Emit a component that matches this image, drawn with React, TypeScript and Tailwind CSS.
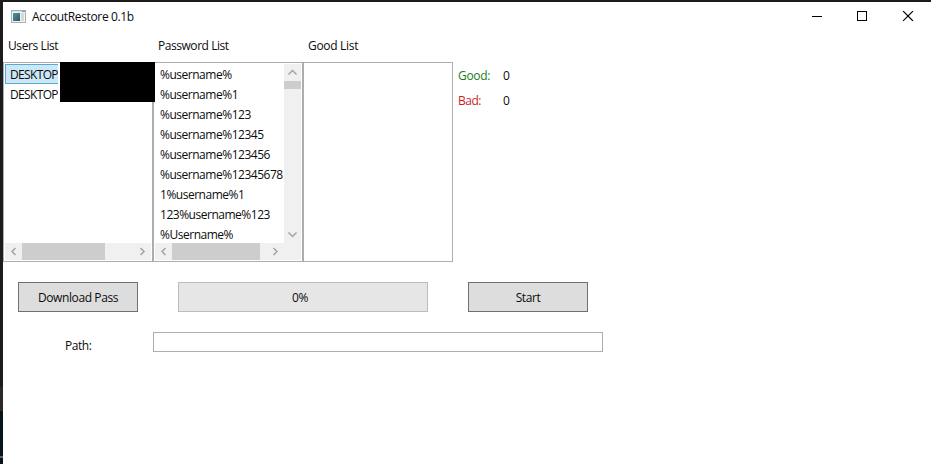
import React from "react";

const passwords = [
  "%username%",
  "%username%1",
  "%username%123",
  "%username%12345",
  "%username%123456",
  "%username%12345678",
  "1%username%1",
  "123%username%123",
  "%Username%",
];

const arrows = {
  left: "M10.5 5 7 8.5l3.5 3.5",
  right: "M6.5 5l3.5 3.5L6.5 12",
  up: "M4.5 10.5l4-4 4 4",
  down: "M4.5 6.5l4 4 4-4",
};

function Arrow({ dir }: { dir: keyof typeof arrows }) {
  return (
    <svg className="size-[17px] shrink-0" viewBox="0 0 17 17" fill="none" stroke="#a3a3a3" strokeWidth="1.5">
      <path d={arrows[dir]} />
    </svg>
  );
}

function ListBox({ children }: { children?: React.ReactNode }) {
  return <div className="flex h-[200px] w-[150px] flex-col border border-[#abadb3] p-px">{children}</div>;
}

function HScroll({ thumb }: { thumb: string }) {
  return (
    <div className="flex h-[17px] shrink-0 bg-[#f0f0f0]">
      <Arrow dir="left" />
      <div className="flex-1">
        <div className={`h-full bg-[#cdcdcd] ${thumb}`} />
      </div>
      <Arrow dir="right" />
    </div>
  );
}

function TitleBar() {
  return (
    <div className="flex h-[29px] items-center">
      <svg className="ml-2 h-[13px] w-[15px]" viewBox="0 0 15 13">
        <defs>
          <linearGradient id="pane" x1="0" y1="0" x2="1" y2="1">
            <stop offset="0" stopColor="#4f9a9a" />
            <stop offset="1" stopColor="#31546b" />
          </linearGradient>
        </defs>
        <rect x=".5" y=".5" width="14" height="12" fill="#f2f2f2" stroke="#a9b0b2" />
        <rect x="1" y="1" width="13" height="1" fill="#d8dcdd" />
        <rect x="2" y="3" width="7" height="8" fill="url(#pane)" />
        <rect x="10" y="3" width="3" height="8" fill="#d5d9da" />
        <rect x="11" y="1" width="3" height="1" fill="#6fae9f" />
      </svg>
      <span className="ml-[6px] flex-1 tracking-[-0.36px]">AccoutRestore 0.1b</span>
      <svg className="mr-[3px] h-[29px] w-[138px]" viewBox="0 0 138 29" fill="none" stroke="#000" shapeRendering="crispEdges">
        <path d="M22 14.5h10M67.5 9.5h9v9h-9z" />
        <path d="M113.5 9.5l9 9M122.5 9.5l-9 9" shapeRendering="auto" strokeWidth="1.1" strokeLinecap="square" />
      </svg>
    </div>
  );
}

export default function App() {
  return (
    <div className="flex h-[464px] w-[931px] overflow-hidden bg-[#1d1b1c] pt-[2px] font-['Open_Sans','Noto_Sans',sans-serif] text-[12px] leading-4 text-[#0c0c0c]">
      <div className="flex w-[3px] shrink-0 flex-col">
        <div className="h-[385px]" />
        <div className="h-6 bg-[#292929]" />
        <div className="h-[45px] bg-[#06151c]" />
        <div className="h-[2px] bg-[#725580]" />
        <div className="flex-1 bg-[#06151c]" />
      </div>
      <div className="flex flex-1 flex-col bg-white">
        <TitleBar />
        <div className="flex h-[31px] pt-[7px] tracking-[-0.4px]">
          <span className="w-[150px] pl-[5px]">Users List</span>
          <span className="w-[150px] pl-[5px] tracking-[-0.45px]">Password List</span>
          <span className="w-[150px] pl-[5px] tracking-[-0.3px]">Good List</span>
        </div>
        <div className="flex">
          <div className="relative">
            <ListBox>
              <div className="flex-1 tracking-[-0.65px]">
                <div className="h-5 w-[53px] overflow-hidden border border-r-0 border-[#5aa9cf] bg-[#cbe8f6] pl-1 leading-5">DESKTOP</div>
                <div className="h-5 w-[53px] overflow-hidden pl-[5px] leading-[22px]">DESKTOP</div>
              </div>
              <HScroll thumb="w-[83px]" />
            </ListBox>
            <div className="absolute top-0 left-[57px] z-10 h-10 w-[95px] bg-black" />
          </div>
          <ListBox>
            <div className="flex h-[179px]">
              <div className="w-[129px] overflow-hidden pl-[5px]">
                {passwords.map((p) => (
                  <div key={p} className="h-5 leading-[22px] tracking-[-0.48px]">{p}</div>
                ))}
              </div>
              <div className="flex w-[17px] flex-col bg-[#f0f0f0]">
                <Arrow dir="up" />
                <div className="flex-1">
                  <div className="h-2 bg-[#cdcdcd]" />
                </div>
                <Arrow dir="down" />
              </div>
            </div>
            <div className="bg-[#f0f0f0] pr-[17px]">
              <HScroll thumb="w-[88px]" />
            </div>
          </ListBox>
          <ListBox />
          <div className="flex flex-col gap-[9px] pt-[6px] pl-[5px]">
            <div className="flex">
              <span className="w-[45px] tracking-[-0.3px] text-[#168016]">Good:</span>
              <span>0</span>
            </div>
            <div className="flex">
              <span className="w-[45px] tracking-[-0.5px] text-[#d01c24]">Bad:</span>
              <span>0</span>
            </div>
          </div>
        </div>
        <div className="mt-5 ml-[15px] flex gap-10 tracking-[-0.4px]">
          <button className="h-[30px] w-[120px] border border-[#707070] bg-[#dddddd] pt-0.5">Download Pass</button>
          <div className="flex h-[30px] w-[250px] items-center justify-center border border-[#bcbcbc] bg-[#e6e6e6] pt-0.5" role="progressbar">
            <span className="-ml-1.5">0%</span>
          </div>
          <button className="h-[30px] w-[120px] border border-[#707070] bg-[#dddddd] pt-0.5">Start</button>
        </div>
        <div className="mt-5 flex">
          <span className="w-[150px] pt-[6px] pl-[62px] tracking-[-0.45px]">Path:</span>
          <div className="h-5 w-[450px] border border-[#abadb3]" />
        </div>
      </div>
    </div>
  );
}
